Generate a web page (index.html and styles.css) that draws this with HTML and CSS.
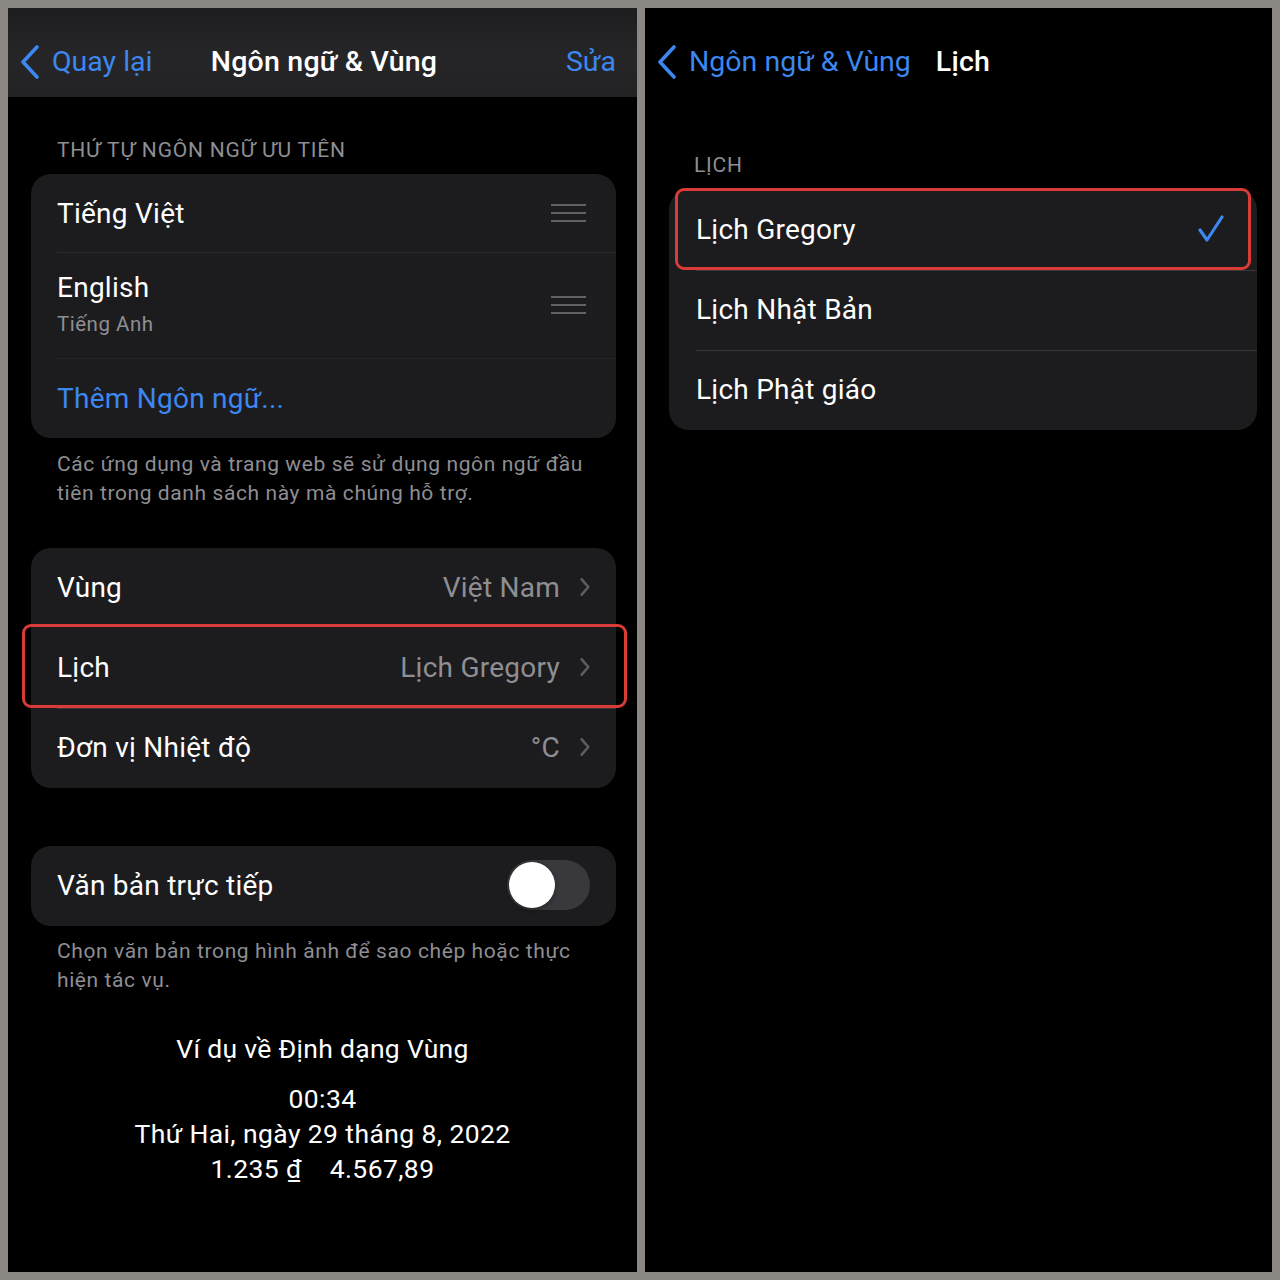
FILE: index.html
```html
<!DOCTYPE html>
<html lang="vi">
<head>
<meta charset="utf-8">
<link rel="stylesheet" href="styles.css">
</head>
<body>
<div class="frame">
  <section class="panel panel-left">
    <header class="nav nav-grey">
      <div class="nav-back">
        <svg class="chev-back" viewBox="0 0 22 34" width="22" height="34"><path d="M18 2 L4 17 L18 32" fill="none" stroke="#3c87f0" stroke-width="3.6" stroke-linecap="round" stroke-linejoin="round"/></svg>
        <span class="link">Quay lại</span>
      </div>
      <div class="nav-title">Ngôn ngữ &amp; Vùng</div>
      <div class="nav-right"><span class="link">Sửa</span></div>
    </header>

    <div class="sec-head first">THỨ TỰ NGÔN NGỮ ƯU TIÊN</div>
    <div class="group">
      <div class="row row-lang1">
        <span class="label">Tiếng Việt</span>
        <span class="handle"><i></i><i></i><i></i></span>
      </div>
      <div class="row row-lang2">
        <div class="stack">
          <span class="label">English</span>
          <span class="sub">Tiếng Anh</span>
        </div>
        <span class="handle"><i></i><i></i><i></i></span>
      </div>
      <div class="row row-add">
        <span class="label label-link">Thêm Ngôn ngữ...</span>
      </div>
    </div>
    <p class="foot foot1">Các ứng dụng và trang web sẽ sử dụng ngôn ngữ đầu tiên trong danh sách này mà chúng hỗ trợ.</p>

    <div class="group group2">
      <div class="row row80">
        <span class="label">Vùng</span>
        <span class="value">Việt Nam</span>
        <svg class="chev" viewBox="0 0 12 20" width="12" height="20"><path d="M3 3 L9 10 L3 17" fill="none" stroke="#5c5c61" stroke-width="2.4" stroke-linecap="round" stroke-linejoin="round"/></svg>
      </div>
      <div class="row row80 marked">
        <span class="label">Lịch</span>
        <span class="value">Lịch Gregory</span>
        <svg class="chev" viewBox="0 0 12 20" width="12" height="20"><path d="M3 3 L9 10 L3 17" fill="none" stroke="#5c5c61" stroke-width="2.4" stroke-linecap="round" stroke-linejoin="round"/></svg>
        <span class="redbox redbox-left"></span>
      </div>
      <div class="row row80">
        <span class="label">Đơn vị Nhiệt độ</span>
        <span class="value">°C</span>
        <svg class="chev" viewBox="0 0 12 20" width="12" height="20"><path d="M3 3 L9 10 L3 17" fill="none" stroke="#5c5c61" stroke-width="2.4" stroke-linecap="round" stroke-linejoin="round"/></svg>
      </div>
    </div>

    <div class="group group3">
      <div class="row row80">
        <span class="label">Văn bản trực tiếp</span>
        <span class="toggle"><span class="knob"></span></span>
      </div>
    </div>
    <p class="foot foot3">Chọn văn bản trong hình ảnh để sao chép hoặc thực hiện tác vụ.</p>

    <div class="example">
      <div class="ex-title">Ví dụ về Định dạng Vùng</div>
      <div class="ex-lines">
        <div>00:34</div>
        <div>Thứ Hai, ngày 29 tháng 8, 2022</div>
        <div>1.235 ₫&nbsp;&nbsp;&nbsp;&nbsp;4.567,89</div>
      </div>
    </div>
  </section>

  <section class="panel panel-right">
    <header class="nav nav-plain">
      <div class="nav-back">
        <svg class="chev-back" viewBox="0 0 22 34" width="22" height="34"><path d="M18 2 L4 17 L18 32" fill="none" stroke="#3c87f0" stroke-width="3.6" stroke-linecap="round" stroke-linejoin="round"/></svg>
        <span class="link">Ngôn ngữ &amp; Vùng</span>
      </div>
      <div class="nav-title nav-title-left">Lịch</div>
    </header>

    <div class="sec-head second">LỊCH</div>
    <div class="group group-r">
      <div class="row row80 marked">
        <span class="label">Lịch Gregory</span>
        <svg class="check" viewBox="0 0 28 28" width="28" height="28"><path d="M3 15 L10 25 L25 2" fill="none" stroke="#3c87f0" stroke-width="3.2" stroke-linecap="round" stroke-linejoin="round"/></svg>
        <span class="redbox redbox-right"></span>
      </div>
      <div class="row row80">
        <span class="label">Lịch Nhật Bản</span>
      </div>
      <div class="row row80">
        <span class="label">Lịch Phật giáo</span>
      </div>
    </div>
  </section>
</div>
</body>
</html>
```

FILE: styles.css
```css
* { box-sizing: border-box; }
html, body { margin: 0; padding: 0; }
body {
  background: #8b8884;
  font-family: Roboto, "Liberation Sans", "Noto Sans", sans-serif;
  color: #fff;
}
.frame {
  width: 1280px;
  height: 1280px;
  padding: 8px;
  display: flex;
  gap: 8px;
}
.panel {
  background: #000;
  height: 1264px;
  display: flex;
  flex-direction: column;
}
.panel-left { width: 629px; }
.panel-right { width: 627px; }

.nav {
  height: 89px;
  padding-top: 18px;
  display: grid;
  align-items: center;
  flex: none;
}
.nav-grey {
  background: linear-gradient(180deg, #1d1d1f 0%, #262628 55%, #222224 100%);
  grid-template-columns: 1fr auto 1fr;
  padding-left: 11px;
  padding-right: 8px;
}
.nav-plain {
  grid-template-columns: auto auto 1fr;
  padding-left: 11px;
}
.nav-back {
  display: flex;
  align-items: center;
  gap: 11px;
}
.chev-back { display: block; }
.link { color: #3c87f0; }
.nav .link { font-size: 28.5px; letter-spacing: 0px; }
.nav-title {
  font-size: 28.5px;
  font-weight: 500;
  letter-spacing: 0.2px;
  color: #fff;
}
.nav-title-left { margin-left: 25px; }
.nav-right { text-align: right; padding-right: 13px; }

.sec-head {
  font-size: 21px;
  letter-spacing: 0.8px;
  color: #8e8e93;
  line-height: 24px;
  padding-left: 49px;
}
.sec-head.first { margin-top: 41px; margin-bottom: 12px; }
.sec-head.second { margin-top: 56px; margin-bottom: 13px; }

.group {
  background: #1c1c1e;
  border-radius: 20px;
  margin: 0 21px 0 23px;
  flex: none;
}
.row {
  position: relative;
  display: flex;
  align-items: center;
  padding-left: 26px;
  padding-right: 26px;
}
.row + .row::before {
  content: "";
  position: absolute;
  top: 0;
  left: 26px;
  right: 0;
  height: 1px;
  background: #38383b;
}
.label {
  font-size: 28px;
  letter-spacing: 0.25px;
  color: #fff;
  flex: 1;
}
.label.label-link { color: #3c87f0; }
.row-lang1 { height: 78px; }
.row-lang2 { height: 106px; }
.row-add { height: 80px; }
.stack { display: flex; flex-direction: column; flex: 1; }
.stack .label { line-height: 34px; }
.sub { font-size: 20.5px; letter-spacing: 0.5px; color: #8e8e93; margin-top: 7px; line-height: 24px; }
.row-lang2 .stack { padding-bottom: 4px; }
.row-lang2::before { background: #2c2c2e !important; }
.row-add::before { background: #262628 !important; }

.handle {
  display: flex;
  flex-direction: column;
  gap: 6px;
  width: 35px;
  margin-right: 4px;
}
.handle i {
  display: block;
  height: 2px;
  background: #626266;
}

.foot {
  margin: 12px 0 0;
  padding: 0 30px 0 49px;
  font-size: 21px;
  letter-spacing: 0.6px;
  line-height: 29px;
  color: #8e8e93;
}
.group2 { margin-top: 40px; }
.row80 { height: 80px; padding-bottom: 2px; }
.value {
  font-size: 28px;
  letter-spacing: 0.25px;
  color: #8e8e93;
  margin-right: 19px;
}
.chev { display: block; margin-right: -1px; transform: scale(1.1); }
.row.marked::before { display: none; }
.redbox {
  position: absolute;
  border: 3px solid #d93b36;
  border-radius: 9px;
  pointer-events: none;
}
.redbox-left { top: -4px; bottom: 0; left: -9px; right: -11px; }
.redbox-right { top: -2px; bottom: 0; left: 6px; right: 6px; }

.group3 { margin-top: 58px; }
.toggle {
  width: 83px;
  height: 50px;
  border-radius: 25px;
  background: #39393d;
  position: relative;
  flex: none;
}
.knob {
  position: absolute;
  left: 2px;
  top: 2px;
  width: 46px;
  height: 46px;
  border-radius: 50%;
  background: #fff;
  box-shadow: 0 2px 5px rgba(0,0,0,0.35);
}
.foot3 { margin-top: 11px; }

.example {
  text-align: center;
  margin-top: 38px;
}
.ex-title { font-size: 26.5px; letter-spacing: 0.3px; line-height: 32px; }
.ex-lines { margin-top: 16px; font-size: 26.5px; letter-spacing: 0.4px; line-height: 35px; }

.group-r { margin: 0 15px 0 24px; }
.group-r .row { padding-left: 27px; padding-right: 32px; }
.group-r .row + .row::before { left: 27px; }
.check { display: block; }
```
